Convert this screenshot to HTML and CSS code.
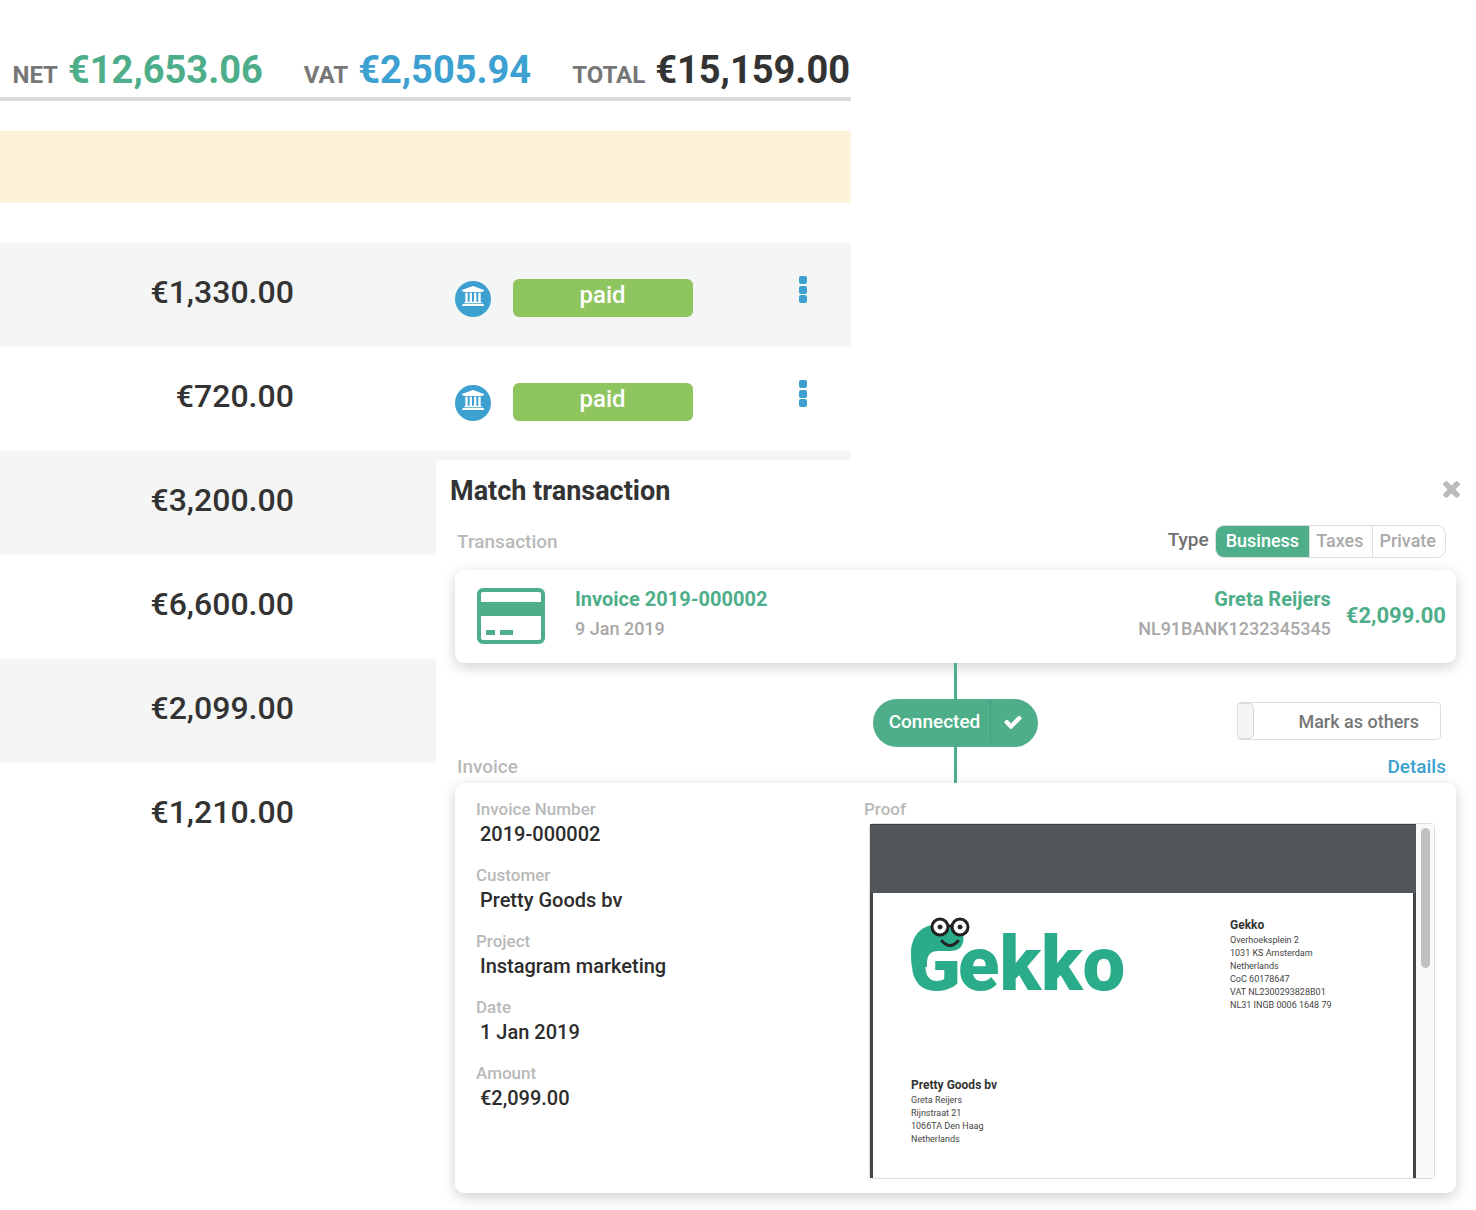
FILE: index.html
```html
<!DOCTYPE html>
<html lang="en">
<head>
<meta charset="utf-8">
<title>Match transaction</title>
<link rel="stylesheet" href="styles.css">
</head>
<body>
<svg class="sprite" aria-hidden="true">
  <symbol id="bank" viewBox="0 0 108 108">
    <path d="M54 15 87 27v4h-4q0 2-3 2H28q-3 0-3-2h-4v-4zM31 35h7v27h6V35h7v27h6V35h7v27h6V35h7v27q3 0 3 4H28q0-4 3-4zM25 68h58q3 0 4 3v4H22v-4q0-3 3-3z"/>
  </symbol>
  <symbol id="dots" viewBox="0 0 8 28">
    <rect width="8" height="8" y="0" rx="2"/><rect width="8" height="8" y="10" rx="2"/><rect width="8" height="8" y="19" rx="2"/>
  </symbol>
</svg>
<div class="page">
  <main class="ledger">
    <div class="totals">
      <div class="total total-net"><span>NET</span><strong>€12,653.06</strong></div>
      <div class="total total-vat"><span>VAT</span><strong>€2,505.94</strong></div>
      <div class="total"><span>TOTAL</span><strong>€15,159.00</strong></div>
    </div>
    <div class="notice"></div>
    <table class="invoices">
      <colgroup><col class="col-amount"><col class="col-bank"><col class="col-status"><col></colgroup>
      <tbody>
        <tr>
          <td class="amount">€1,330.00</td>
          <td class="bank"><svg><use href="#bank"/></svg></td>
          <td><span class="badge">paid</span></td>
          <td class="actions"><button type="button" aria-label="Actions"><svg><use href="#dots"/></svg></button></td>
        </tr>
        <tr>
          <td class="amount">€720.00</td>
          <td class="bank"><svg><use href="#bank"/></svg></td>
          <td><span class="badge">paid</span></td>
          <td class="actions"><button type="button" aria-label="Actions"><svg><use href="#dots"/></svg></button></td>
        </tr>
        <tr><td class="amount">€3,200.00</td><td></td><td></td><td></td></tr>
        <tr><td class="amount">€6,600.00</td><td></td><td></td><td></td></tr>
        <tr><td class="amount">€2,099.00</td><td></td><td></td><td></td></tr>
        <tr><td class="amount">€1,210.00</td><td></td><td></td><td></td></tr>
      </tbody>
    </table>
  </main>

  <section class="dialog" role="dialog" aria-labelledby="dialog-title">
    <header class="dialog-head">
      <h1 id="dialog-title">Match transaction</h1>
      <button type="button" class="close" aria-label="Close">
        <svg viewBox="302 302 1188 1188"><path d="M1490 1322q0 40-28 68l-136 136q-28 28-68 28t-68-28l-294-294-294 294q-28 28-68 28t-68-28l-136-136q-28-28-28-68t28-68l294-294-294-294q-28-28-28-68t28-68l136-136q28-28 68-28t68 28l294 294 294-294q28-28 68-28t68 28l136 136q28 28 28 68t-28 68l-294 294 294 294q28 28 28 68z" transform="translate(0 -64)"/></svg>
      </button>
    </header>

    <div class="type-row">
      <h2>Transaction</h2>
      <div class="type">
        <span id="type-label">Type</span>
        <div class="segments" role="group" aria-labelledby="type-label">
          <button type="button" class="active" aria-pressed="true">Business</button>
          <button type="button" aria-pressed="false">Taxes</button>
          <button type="button" aria-pressed="false">Private</button>
        </div>
      </div>
    </div>

    <article class="card transaction">
      <svg class="card-icon" viewBox="0 0 68 56"><rect x="2" y="2" width="64" height="52" rx="4"/><path d="M2 14h64v14H2zM9 42h9v5H9zM23 42h13v5H23z"/></svg>
      <div class="party">
        <strong>Invoice 2019-000002</strong>
        <span>9 Jan 2019</span>
      </div>
      <div class="party party-right">
        <strong>Greta Reijers</strong>
        <span>NL91BANK1232345345</span>
      </div>
      <strong class="sum">€2,099.00</strong>
    </article>

    <div class="link">
      <div class="link-row">
        <button type="button" class="connected">
          <span>Connected</span>
          <svg viewBox="121 270 1550 1252"><path d="M1671 566q0 40-28 68l-724 724-136 136q-28 28-68 28t-68-28l-136-136-362-362q-28-28-28-68t28-68l136-136q28-28 68-28t68 28l294 295 656-657q28-28 68-28t68 28l136 136q28 28 28 68z"/></svg>
        </button>
        <label class="others"><input type="checkbox"><span>Mark as others</span></label>
      </div>
      <div class="invoice-row">
        <h2>Invoice</h2>
        <a href="#">Details</a>
      </div>
    </div>

    <article class="card invoice">
      <dl>
        <div><dt>Invoice Number</dt><dd>2019-000002</dd></div>
        <div><dt>Customer</dt><dd>Pretty Goods bv</dd></div>
        <div><dt>Project</dt><dd>Instagram marketing</dd></div>
        <div><dt>Date</dt><dd>1 Jan 2019</dd></div>
        <div><dt>Amount</dt><dd>€2,099.00</dd></div>
      </dl>
      <div class="proof">
        <h3>Proof</h3>
        <div class="viewer">
          <div class="canvas">
            <div class="sheet">
              <svg class="logo" viewBox="0 0 216 78" role="img" aria-label="Gekko">
                <text x="-2" y="73" class="wordmark">G</text>
                <path class="gap" d="M16 46Q16 33 27 33H50V42H20Q17 43 17 46z"/>
                <path class="skin" d="M1 50Q0 46 0 36C0 20 10 8 24 8L50 12C54 18 53 27 49 31Q45 34 39 34H27Q16 34 16 46V50z"/>
                <text x="47" y="73" class="wordmark">ekko</text>
                <g class="face">
                  <circle cx="29" cy="10" r="8"/><circle cx="49" cy="10" r="8"/>
                  <path d="M37 9h4M31 24q8 9 16 0"/>
                  <circle class="pupil" cx="29" cy="10" r="2"/><circle class="pupil" cx="49" cy="10" r="2"/>
                </g>
              </svg>
              <address class="sender">
                <strong>Gekko</strong>
                <span>Overhoeksplein 2</span>
                <span>1031 KS Amsterdam</span>
                <span>Netherlands</span>
                <span>CoC 60178647</span>
                <span>VAT NL2300293828B01</span>
                <span>NL31 INGB 0006 1648 79</span>
              </address>
              <address class="recipient">
                <strong>Pretty Goods bv</strong>
                <span>Greta Reijers</span>
                <span>Rijnstraat 21</span>
                <span>1066TA Den Haag</span>
                <span>Netherlands</span>
              </address>
            </div>
          </div>
          <div class="track"><div class="thumb"></div></div>
        </div>
      </div>
    </article>
  </section>
</div>
</body>
</html>
```
FILE: styles.css
```css
:root {
  --green: #4eae8a;
  --blue: #3ca1d0;
  --dark: #333;
  --muted: #b9b9b9;
}

* { box-sizing: border-box; }

body {
  margin: 0;
  background: #fff;
  color: var(--dark);
  font-family: Roboto, "Liberation Sans", sans-serif;
  font-weight: 500;
}

h1, h2, h3, dl, dd { margin: 0; }

button {
  padding: 0;
  border: 0;
  background: none;
  color: inherit;
  font: inherit;
  cursor: pointer;
}

svg { display: block; }
.sprite { display: none; }

/* The dialog shares the middle column with the ledger and covers it. */
.page {
  display: grid;
  grid-template-columns: 436fr 415fr 625fr;
  align-items: start;
}

.ledger { grid-area: 1 / 1 / 2 / 3; }

.dialog {
  grid-area: 1 / 2 / 2 / 4;
  margin-top: 460px;
  padding: 15px 20px 17px 19px;
  background: #fff;
}

/* Ledger */
.totals {
  display: flex;
  justify-content: flex-end;
  gap: 41px;
  padding: 47px 1px 4px 0;
  border-bottom: 4px solid #dcdcdc;
}

.total {
  display: flex;
  align-items: baseline;
  gap: 10px;
}

.total span { color: #777; font-size: 24px; font-weight: 700; line-height: 24px; }
.total strong { font-size: 38px; font-weight: 700; line-height: 46px; }
.total-net strong { color: var(--green); }
.total-vat strong { color: var(--blue); }

.notice {
  height: 72px;
  margin: 30px 0 40px;
  background: #fdf2d8;
}

.invoices {
  width: 100%;
  border-collapse: collapse;
  table-layout: fixed;
}

.col-amount { width: 35%; }
.col-bank { width: 25%; }
.col-status { width: 22%; }

.invoices tr { height: 104px; }
.invoices tr:nth-child(odd) { background: #f4f6f5; }
.invoices td { padding: 0; }

.invoices .amount {
  padding: 0 4px 7px 0;
  font-size: 32px;
  text-align: right;
}

.bank svg {
  width: 36px;
  height: 36px;
  margin: 8px 20px 0 auto;
  border-radius: 50%;
  background: var(--blue);
  fill: #fff;
}

.badge {
  display: block;
  width: 180px;
  height: 38px;
  margin: 6px 0 0 2px;
  border-radius: 6px;
  background: #8fc55f;
  color: #fff;
  font-size: 24px;
  line-height: 32px;
  text-align: center;
}

.actions button { display: block; margin: 0 auto 10px 101px; }
.actions svg { width: 8px; height: 28px; fill: var(--blue); }

/* Dialog */
.dialog-head {
  display: flex;
  justify-content: space-between;
  align-items: center;
  margin: 0 -4px 0 -5px;
}

.dialog h1 { font-size: 27px; font-weight: 700; line-height: 32px; }
.close svg { width: 17px; height: 17px; margin-bottom: 4px; fill: #bbb; overflow: visible; }

.dialog h2 {
  color: var(--muted);
  font-size: 19px;
  font-weight: 500;
  line-height: 24px;
}

.type-row {
  display: flex;
  justify-content: space-between;
  align-items: center;
  padding: 18px 10px 12px 2px;
}

.type {
  display: flex;
  align-items: center;
  gap: 6px;
  color: #707070;
  font-size: 19px;
}

.type > span { padding-bottom: 4px; }

.segments {
  display: flex;
  height: 33px;
  border: 1px solid #ddd;
  border-radius: 9px;
  overflow: hidden;
  color: #aaa;
  font-size: 18px;
}

.segments button { padding: 0 9px 2px 6px; }
.segments button + button { border-left: 1px solid #ddd; }
.segments .active { padding: 0 10px 2px; background: var(--green); color: #fff; }

.card {
  border-radius: 9px;
  background: #fff;
  box-shadow: 0 4px 14px rgba(0, 0, 0, .19);
}

.transaction {
  display: flex;
  align-items: center;
  padding: 14px 10px 19px 22px;
}

.card-icon { width: 68px; height: 56px; margin-top: 4px; fill: var(--green); }
.card-icon rect { fill: none; stroke: var(--green); stroke-width: 4px; }

.party {
  display: flex;
  flex: 1;
  flex-direction: column;
  margin-left: 30px;
  line-height: 30px;
}

.party strong { color: var(--green); font-size: 20px; font-weight: 700; }
.party span { color: #a8a8a8; font-size: 18px; }
.party-right { margin: 0 15px 0 0; text-align: right; }
.sum { padding-top: 2px; color: var(--green); font-size: 22px; font-weight: 700; }

.link {
  position: relative;
  padding-top: 36px;
}

.link::before {
  content: "";
  position: absolute;
  inset: 0 0 0 50%;
  width: 3px;
  margin-left: -2px;
  background: var(--green);
}

.link-row {
  position: relative;
  display: grid;
  grid-template-columns: 1fr auto 1fr;
  align-items: center;
}

.connected {
  display: flex;
  grid-column: 2;
  align-items: center;
  height: 48px;
  padding: 2px 16px 4px;
  border-radius: 24px;
  background: var(--green);
  color: #fff;
  font-size: 19px;
}

.connected span {
  padding-right: 10px;
  border-right: 1px solid #439c7b;
  line-height: 42px;
}

.connected svg { width: 18px; height: 14px; margin-left: 13px; fill: #fff; }

.others {
  display: flex;
  justify-content: space-between;
  align-items: center;
  justify-self: end;
  width: 204px;
  height: 38px;
  margin: 0 15px 4px 0;
  padding-right: 21px;
  border: 1px solid #ddd;
  border-radius: 4px;
  color: #777;
  font-size: 18px;
}

.others input {
  width: 16px;
  height: 36px;
  margin: 0;
  border: 1px solid #d8d8d8;
  border-width: 1px 1px 1px 0;
  border-radius: 3px 5px 5px 3px;
  background: #f5f5f5;
  appearance: none;
}

.invoice-row {
  display: flex;
  justify-content: space-between;
  padding: 8px 10px 4px 2px;
}

.invoice-row a {
  color: var(--blue);
  font-size: 19px;
  line-height: 24px;
  text-decoration: none;
}

.invoice {
  display: grid;
  grid-template-columns: 388fr 571fr;
  padding: 15px 21px 14px;
}

.invoice dl { display: grid; align-content: start; gap: 16px; }
.invoice dt, .proof h3 {
  color: var(--muted);
  font-size: 17px;
  font-weight: 500;
  line-height: 22px;
}
.invoice dd { padding-left: 4px; font-size: 20px; line-height: 28px; color: #2c2c2c; }

/* Document preview */
.viewer {
  display: flex;
  height: 356px;
  margin: 3px 0 0 5px;
  border: 1px solid #ddd;
  border-radius: 4px;
}

.canvas {
  display: flex;
  flex: 1;
  padding: 68px 3px 0;
  background: linear-gradient(#525659 68px, #42474a 68px);
  border-top: 1px solid #3a3d40;
}

.sheet {
  display: grid;
  flex: 1;
  grid-template-columns: 319fr 183fr;
  grid-template-rows: 160px auto;
  padding: 24px 0 0 38px;
  background: #fff;
}

.track { width: 18px; padding: 4px 4px 0 5px; background: #fafafa; }
.thumb { height: 140px; border-radius: 5px; background: #c1c1c1; }

.logo { width: 216px; height: 78px; overflow: visible; }
.wordmark { fill: #2aac8b; font-size: 76px; font-weight: 900; }
.skin { fill: #2aac8b; }
.gap { fill: #fff; }
.face { fill: none; stroke: #222; stroke-width: 3px; stroke-linecap: round; }
.face circle { fill: #fff; }
.face .pupil { fill: #222; stroke-width: 1px; }

address {
  display: flex;
  flex-direction: column;
  color: #444;
  font-size: 9px;
  font-style: normal;
  font-weight: 400;
  line-height: 13px;
}

address strong { color: var(--dark); font-size: 12px; font-weight: 700; line-height: 17px; }
```
